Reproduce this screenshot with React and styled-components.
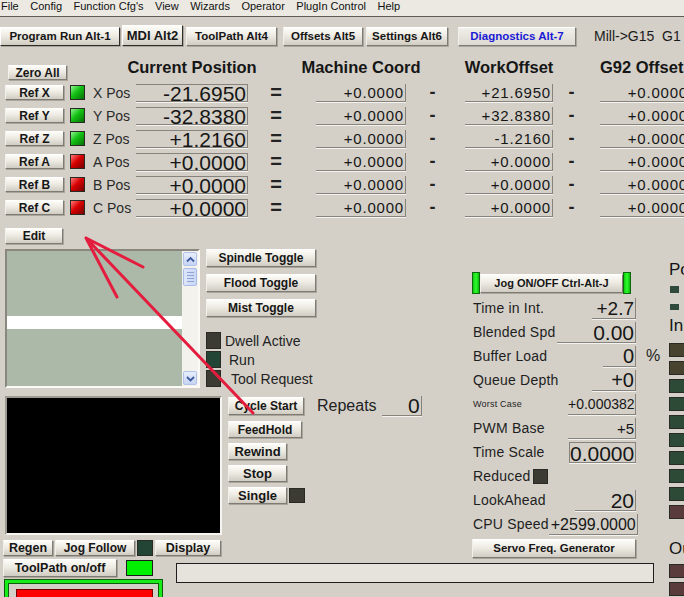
import styled, { createGlobalStyle, css } from "styled-components";

const GlobalStyle = createGlobalStyle`
  html, body { margin: 0; background: #d4d0c8; }
  body { font-family: "Liberation Sans", Arial, sans-serif; }
  * { box-sizing: border-box; }
`;

const Screen = styled.div`
  position: relative;
  width: 684px;
  height: 597px;
  overflow: hidden;
  background: #d4d0c8;
  color: #141414;
`;

const MenuBar = styled.nav`
  display: flex;
  gap: 11.5px;
  height: 17px;
  padding-left: 1px;
  background: #ebe9e2;
  border-bottom: 1px solid #5e5c57;
  font-size: 11px;
  line-height: 13px;
  color: #111;
`;

const buttonFace = css`
  font-family: "Liberation Sans", Arial, sans-serif;
  font-weight: 700;
  color: #161616;
  padding: 0;
  white-space: nowrap;
  overflow: hidden;
  background: linear-gradient(#fdfcf8 0%, #eeebe3 45%, #d0ccc2 100%);
  border: 1px solid;
  border-color: #ffffff #7e7b74 #7e7b74 #f2f0ea;
  box-shadow: 1px 1px 0 #aaa69d;
  cursor: default;
`;

const Btn = styled.button`
  ${buttonFace}
  flex: none;
  width: ${(p) => (p.$w ? `${p.$w}px` : "auto")};
  height: ${(p) => p.$h || 16}px;
  font-size: ${(p) => p.$fs || 12}px;
  line-height: 1;
`;

const TabRow = styled.div`
  display: flex;
  align-items: flex-end;
  height: 21px;
  margin-top: 8px;
`;

const Tab = styled(Btn)`
  margin-left: ${(p) => p.$ml || 0}px;
  color: ${(p) => (p.$blue ? "#1a1ad6" : "#161616")};
  ${(p) =>
    p.$active &&
    css`
      border-color: #ffffff #2e2d2a #2e2d2a #ffffff;
    `}
  ${(p) =>
    p.$flat &&
    css`
      background: linear-gradient(#f1efe9, #dcd9d1);
    `}
`;

const ModeText = styled.span`
  align-self: center;
  margin-left: 18px;
  font-size: 14px;
  white-space: pre;
  color: #1a1a1a;
`;

/* ---------- DRO table ---------- */

const DroGrid = styled.div`
  display: grid;
  grid-template-columns: 65px 23px 43px 112px 68px 90px 59px 88px 47px 90px;
  grid-template-rows: 26px repeat(6, 23px);
  align-items: center;
  margin-top: 9px;
  padding-left: 5px;
`;

const ColTitle = styled.div`
  grid-column: ${(p) => p.$col};
  justify-self: ${(p) => p.$justify || "center"};
  align-self: start;
  margin-top: 2px;
  white-space: nowrap;
  font-size: 16.5px;
  font-weight: 700;
  line-height: 20px;
  color: #161616;
`;

const ZeroAll = styled(Btn)`
  grid-column: 1 / span 2;
  align-self: end;
  margin: 0 0 1px 3px;
`;

const AxisLabel = styled.span`
  font-size: 14px;
  color: #2a2a2a;
  white-space: nowrap;
`;

const Dro = styled.div`
  height: ${(p) => p.$h || 18}px;
  line-height: ${(p) => p.$h || 18}px;
  font-size: ${(p) => p.$fs}px;
  letter-spacing: ${(p) => p.$ls || 0}px;
  text-align: right;
  padding-right: 1px;
  white-space: nowrap;
  color: #161616;
  border-right: 1px solid #86837c;
  border-bottom: 1px solid #86837c;
  ${(p) =>
    p.$top &&
    css`
      border-top: 1px solid #86837c;
    `}
  box-shadow: 0 1px 0 #f4f3ef;
`;

const Sign = styled.span`
  justify-self: center;
  padding-right: ${(p) => p.$pr || 0}px;
  font-size: ${(p) => p.$fs || 18}px;
  font-weight: 700;
  color: #222;
`;

const ledColors = {
  green: "linear-gradient(135deg, #8ff58f 0%, #12c012 45%, #067006 100%)",
  red: "linear-gradient(135deg, #ff7a7a 0%, #d80000 45%, #760000 100%)",
  olive: "#48432f",
  teal: "#234536",
  moss: "#2c4a36",
  maroon: "#5a3b3b",
  dark: "#3b3a33",
  lime: "#00f000",
};

const Led = styled.span`
  display: block;
  flex: none;
  width: ${(p) => p.$w || 15}px;
  height: ${(p) => p.$h || 15}px;
  background: ${(p) => ledColors[p.$c]};
  border: 1px solid ${(p) => (p.$c === "lime" ? "#1b1b1b" : "#2a2a24")};
  margin-left: ${(p) => p.$ml || 0}px;
`;

/* ---------- lower area ---------- */

const Lower = styled.div`
  display: grid;
  grid-template-columns: 466px 194px 24px;
  grid-template-rows: 335px 37px;
  margin-top: 5px;
`;

const Main = styled.div`
  display: flex;
  flex-direction: column;
`;

const UpperRow = styled.div`
  display: flex;
  height: 165px;
`;

const ListCol = styled.div`
  display: flex;
  flex-direction: column;
  width: 200px;
  padding: 4px 0 0 5px;
  gap: 5px;
`;

const ListFrame = styled.div`
  display: flex;
  width: 195px;
  height: 139px;
  border: 2px solid;
  border-color: #8a877f #fbfaf6 #fbfaf6 #8a877f;
`;

const ListBody = styled.div`
  flex: 1;
  background: #acb8a8;
  overflow: hidden;
`;

const ListLine = styled.div`
  height: 13px;
  background: ${(p) => (p.$active ? "#ffffff" : "transparent")};
`;

const ScrollBar = styled.div`
  display: flex;
  flex-direction: column;
  width: 16px;
  background: #f3f2ed;
  padding: 1px 0;
`;

const ScrollBtn = styled.div`
  display: flex;
  align-items: center;
  justify-content: center;
  height: 14px;
  margin: 0 1px;
  background: linear-gradient(#e8eefc, #c6d4f5);
  border: 1px solid #b3c3e8;
  border-radius: 2px;
`;

const Thumb = styled.div`
  display: flex;
  flex-direction: column;
  justify-content: center;
  align-items: center;
  gap: 2px;
  height: 18px;
  margin: 2px 1px 0;
  background: linear-gradient(90deg, #dde6fb, #c9d7f7);
  border: 1px solid #a9bbe6;
  border-radius: 2px;

  & > i {
    display: block;
    width: 7px;
    height: 1px;
    background: #8ea3d4;
  }
`;

const Spacer = styled.div`
  flex: 1;
`;

const ControlCol = styled.div`
  display: flex;
  flex-direction: column;
  margin-left: 6px;
  padding-top: 25px;
`;

const ToggleStack = styled.div`
  display: flex;
  flex-direction: column;
  gap: 7px;
`;

const LedStack = styled.div`
  display: flex;
  flex-direction: column;
  gap: 2px;
  margin-top: 15px;
`;

const LedRow = styled.div`
  display: flex;
  align-items: center;
  gap: ${(p) => p.$gap || 4}px;
  font-size: 14px;
  color: #222;
  white-space: nowrap;
`;

const MiddleRow = styled.div`
  display: flex;
  margin-top: 7px;
  height: 139px;
`;

const ToolPathView = styled.div`
  width: 217px;
  height: 139px;
  margin-left: 5px;
  background: #000;
  border: 2px solid;
  border-color: #9d9a92 #f6f5f1 #f6f5f1 #9d9a92;
`;

const RunStack = styled.div`
  display: flex;
  flex-direction: column;
  gap: 5px;
  margin-left: 6px;
`;

const RunRow = styled.div`
  display: flex;
  align-items: center;
`;

const Repeats = styled.span`
  margin-left: 13px;
  font-size: 16px;
  color: #222;
`;

const RepeatBox = styled(Dro)`
  width: 40px;
  margin-left: 5px;
`;

const ViewBar = styled.div`
  display: flex;
  align-items: center;
  gap: 2px;
  margin-top: 5px;
  padding-left: 3px;
`;

/* ---------- right panel ---------- */

const Panel = styled.div`
  padding: 48px 0 0 6px;
`;

const JogWrap = styled.div`
  display: flex;
  align-items: center;
  width: 159px;
  height: 22px;
  margin-bottom: 2px;
`;

const GreenBar = styled.span`
  width: 8px;
  height: 22px;
  background: linear-gradient(90deg, #14c814, #2bff2b 50%, #0fb50f);
  border: 1px solid #0b6a0b;
`;

const JogBtn = styled(Btn)`
  flex: 1;
  height: 19px;
`;

const PanelRow = styled.div`
  display: grid;
  grid-template-columns: 1fr auto 24px;
  align-items: center;
  height: 24px;
  padding-left: 1px;
`;

const PanelLabel = styled.span`
  display: flex;
  align-items: center;
  gap: 3px;
  font-size: ${(p) => (p.$small ? 9 : 14)}px;
  letter-spacing: 0.2px;
  color: #1e1e1e;
  white-space: nowrap;
`;

const PanelValue = styled(Dro)`
  width: ${(p) => p.$w}px;
  ${(p) =>
    p.$boxed &&
    css`
      border-top: 1px solid #86837c;
      border-left: 1px solid #86837c;
    `}
`;

const Unit = styled.span`
  padding-left: 10px;
  font-size: 16px;
  color: #222;
`;

const ServoBtn = styled(Btn)`
  margin-top: 3px;
`;

/* ---------- far right strip ---------- */

const Strip = styled.div`
  grid-row: 1 / span 2;
  grid-column: 3;
  display: flex;
  flex-direction: column;
  padding-left: 9px;
`;

const StripTitle = styled.span`
  margin-top: ${(p) => p.$mt}px;
  font-size: 17px;
  line-height: 20px;
  color: #141414;
  white-space: nowrap;
`;

const PinDot = styled.span`
  width: 9px;
  height: 7px;
  margin: ${(p) => p.$mt}px 0 0 1px;
  background: #2f4a3a;
`;

const PinStack = styled.div`
  display: flex;
  flex-direction: column;
  gap: 4px;
  margin-top: ${(p) => p.$mt}px;
`;

/* ---------- bottom strip ---------- */

const Bottom = styled.div`
  grid-row: 2;
  grid-column: 1 / span 2;
  display: grid;
  grid-template-columns: 176px 478px;
`;

const BottomLeft = styled.div`
  display: flex;
  flex-direction: column;
`;

const ToolPathToggle = styled.div`
  display: flex;
  align-items: center;
  padding-left: 3px;
  gap: 9px;
`;

const ResetFrame = styled.div`
  width: 157px;
  height: 24px;
  margin: 3px 0 0 5px;
  padding: 6px 6px 0 8px;
  background: #d4d0c8;
  border: 3px solid #19ea19;
  box-shadow: 0 0 0 1px #0c5a0c, inset 0 0 0 1px #0c5a0c;
`;

const ResetFace = styled.div`
  height: 100%;
  background: #ff0000;
  border: 1px solid #7a0000;
`;

const StatusBar = styled.div`
  width: 478px;
  height: 20px;
  margin-top: 4px;
  background: #e5e3db;
  border: 1px solid #1e1e1e;
`;

const Overlay = styled.svg`
  position: absolute;
  inset: 0;
  pointer-events: none;
`;

const menus = ["File", "Config", "Function Cfg's", "View", "Wizards", "Operator", "PlugIn Control", "Help"];

const axes = [
  { a: "X", led: "green", cur: "-21.6950", mc: "+0.0000", wo: "+21.6950", g92: "+0.0000" },
  { a: "Y", led: "green", cur: "-32.8380", mc: "+0.0000", wo: "+32.8380", g92: "+0.0000" },
  { a: "Z", led: "green", cur: "+1.2160", mc: "+0.0000", wo: "-1.2160", g92: "+0.0000" },
  { a: "A", led: "red", cur: "+0.0000", mc: "+0.0000", wo: "+0.0000", g92: "+0.0000" },
  { a: "B", led: "red", cur: "+0.0000", mc: "+0.0000", wo: "+0.0000", g92: "+0.0000" },
  { a: "C", led: "red", cur: "+0.0000", mc: "+0.0000", wo: "+0.0000", g92: "+0.0000" },
];

const stats = [
  { label: "Time in Int.", value: "+2.7", w: 44, fs: 19 },
  { label: "Blended Spd", value: "0.00", w: 79, fs: 21 },
  { label: "Buffer Load", value: "0", w: 33, fs: 20, unit: "%" },
  { label: "Queue Depth", value: "+0", w: 44, fs: 20 },
  { label: "Worst Case", small: true, value: "+0.000382", w: 68, fs: 14 },
  { label: "PWM Base", value: "+5", w: 68, fs: 15 },
  { label: "Time Scale", value: "0.0000", w: 67, fs: 21, boxed: true },
  { label: "Reduced", led: true },
  { label: "LookAhead", value: "20", w: 61, fs: 21 },
  { label: "CPU Speed", value: "+2599.0000", w: 89, fs: 16 },
];

const inputs = ["olive", "olive", "moss", "moss", "moss", "moss", "moss", "moss", "moss", "maroon"];

function Chevron({ down }) {
  return (
    <svg width="9" height="7" viewBox="0 0 9 7">
      <path
        d={down ? "M1 2 L4.5 5.5 L8 2" : "M1 5.5 L4.5 2 L8 5.5"}
        stroke="#3d5a9e"
        strokeWidth="1.8"
        fill="none"
      />
    </svg>
  );
}

function GCodeList() {
  return (
    <ListFrame>
      <ListBody>
        {Array.from({ length: 11 }, (_, i) => (
          <ListLine key={i} $active={i === 5} />
        ))}
      </ListBody>
      <ScrollBar>
        <ScrollBtn>
          <Chevron />
        </ScrollBtn>
        <Thumb>
          <i />
          <i />
          <i />
          <i />
        </Thumb>
        <Spacer />
        <ScrollBtn>
          <Chevron down />
        </ScrollBtn>
      </ScrollBar>
    </ListFrame>
  );
}

export default function App() {
  return (
    <Screen>
      <GlobalStyle />
      <MenuBar>
        {menus.map((m) => (
          <span key={m}>{m}</span>
        ))}
      </MenuBar>

      <TabRow>
        <Tab $w={120} $h={19} $fs={11.5} $active>Program Run Alt-1</Tab>
        <Tab $w={61} $h={21} $fs={13} $ml={2} $active>MDI Alt2</Tab>
        <Tab $w={91} $h={19} $fs={11.5} $ml={3}>ToolPath Alt4</Tab>
        <Tab $w={80} $h={19} $fs={11.5} $ml={6}>Offsets Alt5</Tab>
        <Tab $w={82} $h={19} $fs={11.5} $ml={3}>Settings Alt6</Tab>
        <Tab $w={118} $h={19} $fs={11.5} $ml={10} $blue $flat>Diagnostics Alt-7</Tab>
        <ModeText>{"Mill->G15  G1"}</ModeText>
      </TabRow>

      <DroGrid>
        <ZeroAll $w={59} $h={15} $fs={12}>Zero All</ZeroAll>
        <ColTitle $col={4}>Current Position</ColTitle>
        <ColTitle $col={6}>Machine Coord</ColTitle>
        <ColTitle $col={8}>WorkOffset</ColTitle>
        <ColTitle $col={10} $justify="start">G92 Offset</ColTitle>
        {axes.map((r) => (
          <>
            <Btn key={`b${r.a}`} $w={59} $h={15} $fs={12}>Ref {r.a}</Btn>
            <Led key={`l${r.a}`} $c={r.led} />
            <AxisLabel key={`n${r.a}`}>{r.a} Pos</AxisLabel>
            <Dro key={`c${r.a}`} $fs={21} $top>{r.cur}</Dro>
            <Sign key={`e${r.a}`} $pr={12} $fs={20}>=</Sign>
            <Dro key={`m${r.a}`} $fs={15} $ls={0.8}>{r.mc}</Dro>
            <Sign key={`d${r.a}`} $pr={6}>-</Sign>
            <Dro key={`w${r.a}`} $fs={15} $ls={0.8}>{r.wo}</Dro>
            <Sign key={`f${r.a}`} $pr={10}>-</Sign>
            <Dro key={`g${r.a}`} $fs={15} $ls={0.8}>{r.g92}</Dro>
          </>
        ))}
      </DroGrid>

      <Lower>
        <Main>
          <UpperRow>
            <ListCol>
              <Btn $w={58} $h={16} $fs={12}>Edit</Btn>
              <GCodeList />
            </ListCol>
            <ControlCol>
              <ToggleStack>
                <Btn $w={110} $h={18} $fs={12}>Spindle Toggle</Btn>
                <Btn $w={110} $h={18} $fs={12}>Flood Toggle</Btn>
                <Btn $w={110} $h={18} $fs={12}>Mist Toggle</Btn>
              </ToggleStack>
              <LedStack>
                <LedRow><Led $c="dark" $h={17} />Dwell Active</LedRow>
                <LedRow $gap={8}><Led $c="teal" $h={17} />Run</LedRow>
                <LedRow $gap={10}><Led $c="dark" $h={17} />Tool Request</LedRow>
              </LedStack>
            </ControlCol>
          </UpperRow>

          <MiddleRow>
            <ToolPathView />
            <RunStack>
              <RunRow>
                <Btn $w={76} $h={18} $fs={12}>Cycle Start</Btn>
                <Repeats>Repeats</Repeats>
                <RepeatBox $fs={21} $h={20}>0</RepeatBox>
              </RunRow>
              <RunRow>
                <Btn $w={74} $h={17} $fs={12}>FeedHold</Btn>
              </RunRow>
              <RunRow>
                <Btn $w={59} $h={17} $fs={13}>Rewind</Btn>
              </RunRow>
              <RunRow>
                <Btn $w={59} $h={17} $fs={13}>Stop</Btn>
              </RunRow>
              <RunRow>
                <Btn $w={59} $h={17} $fs={13}>Single</Btn>
                <Led $c="dark" $w={16} $ml={2} />
              </RunRow>
            </RunStack>
          </MiddleRow>

          <ViewBar>
            <Btn $w={50} $h={16} $fs={12.5}>Regen</Btn>
            <Btn $w={80} $h={16} $fs={12}>Jog Follow</Btn>
            <Led $c="teal" $w={16} $h={16} />
            <Btn $w={66} $h={16} $fs={12.5}>Display</Btn>
          </ViewBar>
        </Main>

        <Panel>
          <JogWrap>
            <GreenBar />
            <JogBtn $fs={11}>Jog ON/OFF Ctrl-Alt-J</JogBtn>
            <GreenBar />
          </JogWrap>
          {stats.map((s) => (
            <PanelRow key={s.label}>
              <PanelLabel $small={s.small}>
                {s.label}
                {s.led && <Led $c="dark" $w={15} $h={15} />}
              </PanelLabel>
              {s.led ? (
                <span />
              ) : (
                <PanelValue $w={s.w} $fs={s.fs} $h={21} $boxed={s.boxed}>
                  {s.value}
                </PanelValue>
              )}
              <Unit>{s.unit}</Unit>
            </PanelRow>
          ))}
          <ServoBtn $w={164} $h={19} $fs={11.5}>Servo Freq. Generator</ServoBtn>
        </Panel>

        <Strip>
          <StripTitle $mt={36}>Port</StripTitle>
          <PinDot $mt={6} />
          <PinDot $mt={11} />
          <StripTitle $mt={6}>Input</StripTitle>
          <PinStack $mt={7}>
            {inputs.map((c, i) => (
              <Led key={i} $c={c} $w={18} $h={14} />
            ))}
          </PinStack>
          <StripTitle $mt={20}>Output</StripTitle>
          <PinStack $mt={5}>
            <Led $c="maroon" $w={18} $h={14} />
            <Led $c="maroon" $w={18} $h={14} />
          </PinStack>
        </Strip>

        <Bottom>
          <BottomLeft>
            <ToolPathToggle>
              <Btn $w={114} $h={18} $fs={12.5}>ToolPath on/off</Btn>
              <Led $c="lime" $w={27} $h={16} />
            </ToolPathToggle>
            <ResetFrame>
              <ResetFace />
            </ResetFrame>
          </BottomLeft>
          <StatusBar />
        </Bottom>
      </Lower>

      <Overlay viewBox="0 0 684 597" width="684" height="597">
        <path
          d="M253 413 L86 238 M86 238 L143 267 M86 238 L117 297"
          stroke="#e41d3f"
          strokeWidth="3"
          strokeLinecap="round"
          fill="none"
        />
      </Overlay>
    </Screen>
  );
}
